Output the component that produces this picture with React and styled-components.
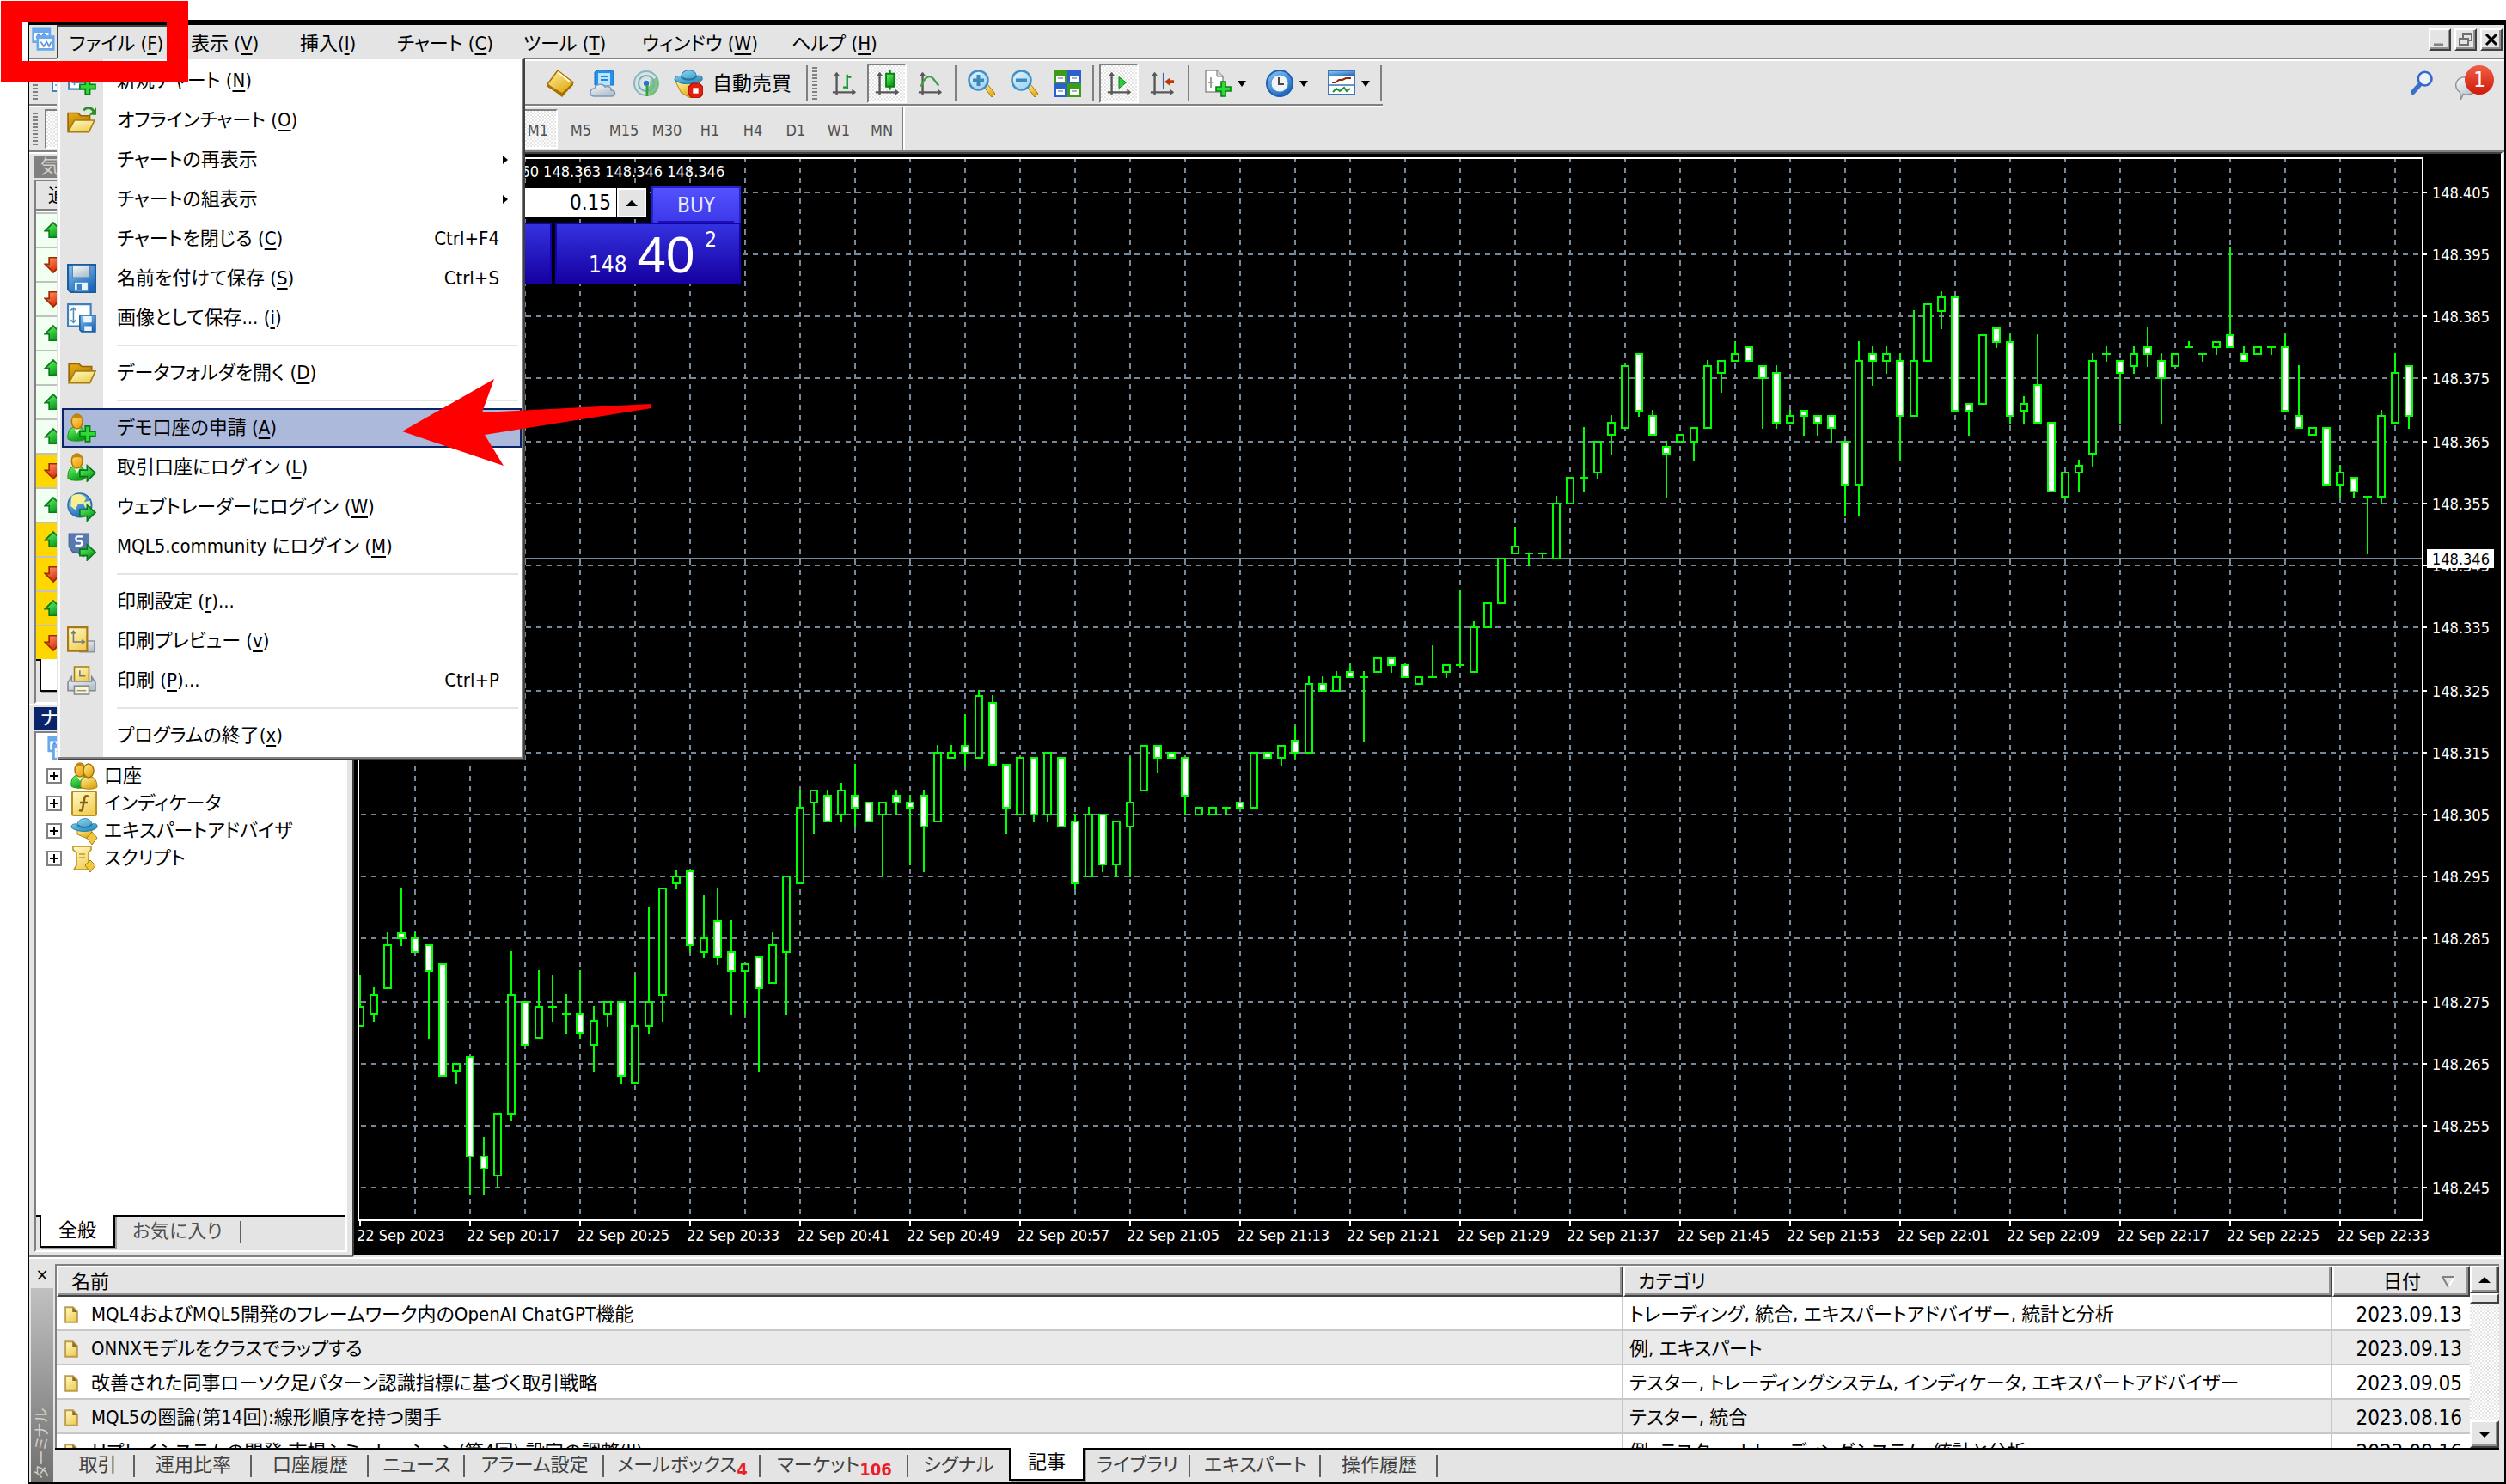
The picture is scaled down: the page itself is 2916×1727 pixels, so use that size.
import React from "react";
import styled, { createGlobalStyle, css } from "styled-components";

const GlobalStyle = createGlobalStyle`
  * {
    box-sizing: border-box;
  }

  body {
    margin: 0;
    background: #fff;
    color: #000;
    font-family: "DejaVu Sans Condensed", "Noto Sans CJK JP", sans-serif;
    font-size: 22px;
    line-height: 28px;
    font-feature-settings: "palt";
  }

  button,
  input {
    font: inherit;
    font-feature-settings: inherit;
    color: inherit;
    border: 0;
    border-radius: 0;
    padding: 0;
    background: none;
  }
`;

/* ---------- data ---------- */

const menus = [
  { label: "ファイル (", key: "F", width: 141, open: true },
  { label: "表示 (", key: "V", width: 127 },
  { label: "挿入(", key: "I", width: 113 },
  { label: "チャート (", key: "C", width: 147 },
  { label: "ツール (", key: "T", width: 138 },
  { label: "ウィンドウ (", key: "W", width: 174 },
  { label: "ヘルプ (", key: "H", width: 140 },
];

const fileMenu = [
  { label: "新規チャート (", key: "N", icon: "newChart" },
  { label: "オフラインチャート (", key: "O", icon: "folderArrow" },
  { label: "チャートの再表示", sub: true },
  { label: "チャートの組表示", sub: true },
  { label: "チャートを閉じる (", key: "C", shortcut: "Ctrl+F4" },
  { label: "名前を付けて保存 (", key: "S", icon: "floppy", shortcut: "Ctrl+S" },
  { label: "画像として保存... (", key: "i", icon: "savePicture" },
  null,
  { label: "データフォルダを開く (", key: "D", icon: "folder" },
  null,
  { label: "デモ口座の申請 (", key: "A", icon: "userPlus", active: true },
  { label: "取引口座にログイン (", key: "L", icon: "userArrow" },
  { label: "ウェブトレーダーにログイン (", key: "W", icon: "globeArrow" },
  { label: "MQL5.community にログイン (", key: "M", icon: "mqlArrow" },
  null,
  { label: "印刷設定 (", key: "r", tail: ")..." },
  { label: "印刷プレビュー (", key: "v", icon: "preview" },
  { label: "印刷 (", key: "P", tail: ")...", icon: "printer", shortcut: "Ctrl+P" },
  null,
  { label: "プログラムの終了(", key: "x" },
];

const periods = ["M1", "M5", "M15", "M30", "H1", "H4", "D1", "W1", "MN"];

const quotes = [
  { up: true },
  { up: false },
  { up: false },
  { up: true },
  { up: true },
  { up: true },
  { up: true },
  { up: false, hot: true },
  { up: true },
  { up: true, hot: true },
  { up: false, hot: true },
  { up: true, hot: true },
  { up: false, hot: true },
];

const navigator = [
  { label: "口座", icon: "accounts" },
  { label: "インディケータ", icon: "indicator" },
  { label: "エキスパートアドバイザ", icon: "expert" },
  { label: "スクリプト", icon: "script" },
];

const articles = [
  {
    title: "MQL4およびMQL5開発のフレームワーク内のOpenAI ChatGPT機能",
    category: "トレーディング, 統合, エキスパートアドバイザー, 統計と分析",
    date: "2023.09.13",
  },
  { title: "ONNXモデルをクラスでラップする", category: "例, エキスパート", date: "2023.09.13" },
  {
    title: "改善された同事ローソク足パターン認識指標に基づく取引戦略",
    category: "テスター, トレーディングシステム, インディケータ, エキスパートアドバイザー",
    date: "2023.09.05",
  },
  { title: "MQL5の圏論(第14回):線形順序を持つ関手", category: "テスター, 統合", date: "2023.08.16" },
  {
    title: "リプレイシステムの開発-市場シミュレーション(第4回):設定の調整(II)",
    category: "例, テスター, トレーディングシステム, 統計と分析",
    date: "2023.08.16",
  },
];

const terminalTabs = [
  { label: "取引", width: 93 },
  { label: "運用比率", width: 136 },
  { label: "口座履歴", width: 136 },
  { label: "ニュース", width: 112 },
  { label: "アラーム設定", width: 162 },
  { label: "メールボックス", width: 182, count: 4 },
  { label: "マーケット", width: 172, count: 106 },
  { label: "シグナル", width: 117, last: true },
  { label: "記事", width: 88, active: true },
  { label: "ライブラリ", width: 123 },
  { label: "エキスパート", width: 152 },
  { label: "操作履歴", width: 136 },
];

// [open, high, low, close] in points above 148.000
const candles = [
  [271, 279, 271, 274], [273, 277, 272, 276], [277, 286, 277, 284], [286, 293, 284, 285],
  [285, 286, 283, 283], [284, 284, 269, 280], [281, 281, 263, 263], [264, 265, 262, 265],
  [266, 266, 244, 250], [250, 253, 244, 248], [247, 257, 245, 257], [257, 283, 256, 276],
  [275, 275, 268, 268], [269, 280, 269, 274], [274, 279, 272, 274], [273, 276, 270, 273],
  [273, 280, 269, 270], [268, 274, 264, 272], [273, 275, 271, 275], [275, 275, 262, 263],
  [262, 279, 262, 271], [271, 290, 270, 275], [276, 293, 272, 293], [294, 296, 293, 295],
  [296, 296, 283, 284], [283, 292, 282, 285], [288, 293, 281, 282], [283, 288, 273, 280],
  [280, 281, 273, 281], [282, 282, 264, 277], [278, 286, 278, 284], [283, 295, 273, 295],
  [294, 309, 294, 306], [307, 309, 302, 309], [308, 309, 304, 304], [305, 310, 304, 309],
  [308, 313, 303, 306], [307, 307, 304, 304], [305, 307, 295, 307], [308, 309, 305, 307],
  [307, 308, 297, 306], [308, 309, 296, 303], [304, 316, 304, 315], [314, 316, 314, 315],
  [316, 321, 313, 315], [314, 325, 314, 324], [323, 324, 313, 313], [313, 313, 302, 306],
  [305, 314, 305, 314], [314, 314, 304, 305], [305, 315, 304, 315], [314, 314, 303, 303],
  [304, 305, 293, 294], [295, 306, 295, 305], [305, 305, 296, 297], [297, 304, 295, 304],
  [303, 314, 295, 307], [309, 316, 309, 316], [316, 316, 312, 314], [315, 315, 314, 314],
  [314, 314, 305, 308], [305, 306, 305, 306], [305, 306, 305, 306], [306, 306, 305, 306],
  [307, 307, 306, 306], [306, 315, 306, 315], [315, 315, 314, 314], [314, 316, 313, 316],
  [317, 319, 314, 315], [315, 327, 315, 326], [326, 327, 325, 325], [325, 328, 325, 327],
  [328, 329, 327, 327], [327, 328, 317, 327], [328, 330, 328, 330], [330, 330, 328, 329],
  [329, 329, 327, 327], [326, 327, 326, 327], [327, 332, 327, 327], [328, 329, 327, 329],
  [329, 341, 329, 329], [328, 336, 328, 335], [335, 339, 335, 339], [339, 346, 339, 346],
  [347, 351, 347, 348], [347, 347, 345, 347], [347, 347, 346, 347], [346, 356, 346, 355],
  [355, 359, 355, 359], [359, 367, 357, 359], [360, 365, 359, 365], [366, 369, 363, 368],
  [367, 377, 367, 377], [379, 379, 369, 370], [369, 370, 366, 366], [364, 365, 356, 363],
  [365, 366, 365, 366], [365, 367, 362, 367], [367, 378, 367, 377], [376, 378, 373, 378],
  [378, 381, 378, 379], [380, 380, 378, 378], [377, 377, 367, 375], [376, 377, 367, 368],
  [368, 370, 368, 369], [370, 370, 366, 369], [369, 369, 366, 368], [369, 369, 365, 367],
  [365, 365, 353, 358], [358, 381, 353, 378], [379, 380, 374, 378], [378, 380, 376, 379],
  [378, 379, 362, 369], [369, 386, 369, 378], [378, 387, 378, 387], [386, 389, 383, 388],
  [388, 388, 370, 370], [371, 371, 366, 370], [371, 382, 371, 382], [383, 383, 380, 381],
  [381, 382, 368, 369], [370, 372, 368, 371], [374, 382, 368, 368], [368, 368, 357, 357],
  [356, 360, 356, 360], [360, 362, 357, 361], [363, 379, 361, 378], [379, 380, 378, 379],
  [378, 378, 368, 376], [377, 380, 376, 379], [380, 383, 377, 379], [378, 379, 368, 375],
  [377, 379, 377, 379], [380, 381, 380, 380], [379, 379, 378, 379], [380, 381, 379, 381],
  [382, 396, 380, 380], [379, 380, 378, 378], [379, 380, 379, 380], [380, 380, 379, 380],
  [380, 382, 370, 370], [369, 377, 367, 367], [366, 367, 366, 367], [367, 367, 358, 358],
  [358, 361, 356, 360], [359, 359, 356, 357], [356, 356, 347, 356], [356, 370, 355, 369],
  [368, 379, 368, 376], [377, 377, 367, 369],
];

/* ---------- icons ---------- */

const Svg = styled.svg`
  display: block;
  flex: none;
  width: ${({ $size }) => $size || 32}px;
  height: ${({ $size }) => $size || 32}px;
`;

const Gradients = styled.svg`
  position: absolute;
  width: 0;
  height: 0;
`;

const Grad = ({ id, from, to }) => (
  <linearGradient id={id} x1="0" y1="0" x2="0.6" y2="1">
    <stop offset="0" stopColor={from} />
    <stop offset="1" stopColor={to} />
  </linearGradient>
);

const Defs = () => (
  <Gradients aria-hidden="true">
    <defs>
      <Grad id="gold" from="#fff3a0" to="#e0a510" />
      <Grad id="darkGold" from="#e8b018" to="#b07800" />
      <Grad id="paleGold" from="#fffbc8" to="#f0d058" />
      <Grad id="skin" from="#ffe078" to="#f0a010" />
      <Grad id="green" from="#6cf86c" to="#0a9a1a" />
      <Grad id="red" from="#ff9a70" to="#d82800" />
      <Grad id="blue" from="#8cc8f4" to="#2068b8" />
      <Grad id="sky" from="#e8f8ff" to="#a0d4f4" />
      <Grad id="steel" from="#f8fafc" to="#b4c0cc" />
      <Grad id="hat" from="#98dcf4" to="#3090c0" />
    </defs>
  </Gradients>
);

const Plus = () => (
  <path d="M20 14h5v6h6v5h-6v6h-5v-6h-6v-5h6z" fill="#30d838" stroke="#068010" strokeWidth="1.6" />
);

const GoArrow = () => (
  <path d="M14 19h8v-5l9 8-9 9v-5h-8z" fill="url(#green)" stroke="#06781a" strokeWidth="1.6" />
);

const User = () => (
  <>
    <path d="M1 28c-1-9 3-13 8-13h4c5 0 7 5 7 13-4 3-15 3-19 0z" fill="url(#green)" stroke="#1c9a1c" />
    <path d="M7 15l4 7 4-7z" fill="#f4fff0" />
    <ellipse cx="11" cy="9" rx="6" ry="8" fill="url(#skin)" stroke="#b07800" strokeWidth="1.500" />
    <path d="M5 7c0-8 12-8 12 0-2-3-9-3-12 0z" fill="#c08810" />
  </>
);

const Axes = () => (
  <>
    <path d="M7 3v27M2 27h28" stroke="#585858" strokeWidth="2.500" fill="none" />
    <path d="M3 7l4-5 4 5zM26 23l5 4-5 4z" fill="#585858" />
  </>
);

const Lens = ({ plus }) => (
  <>
    <path d="M19 20l4-3 9 11-4 4z" fill="url(#gold)" stroke="#a87800" />
    <circle cx="12.500" cy="12.500" r="11" fill="url(#sky)" stroke="#4090c8" strokeWidth="2.500" />
    <path d={plus ? "M6 12.500h13M12.500 6v13" : "M6 12.500h13"} stroke="#4088b8" strokeWidth="4" />
  </>
);

const Hat = () => (
  <>
    <path d="M1 12c0-5 4-4 7-4 2-8 15-9 17 0 4-1 7 0 6 4-6 6-24 6-30 0z" fill="url(#hat)" stroke="#2884b0" />
    <path d="M8 9c4 4 14 4 17-1" stroke="#2478a0" strokeWidth="2" fill="none" />
  </>
);

const icons = {
  logo: (
    <>
      <path d="M3 2h22v17H3z" fill="#fff" stroke="#6aa8e8" strokeWidth="3" />
      <path d="M3 2h22v5H3z" fill="#6aa8f0" />
      <path d="M7 14l3-5 3 5 4-6 4 5" fill="none" stroke="#5a90e0" strokeWidth="2" />
      <path d="M9 12h21v17H9z" fill="#fff" stroke="#6aa8e8" strokeWidth="3" />
      <path d="M9 11h21v4H9z" fill="#6aa8f0" />
      <path d="M13 19l4 6 4-6 3 6 3-6" fill="none" stroke="#5a90e0" strokeWidth="2" />
    </>
  ),
  newChart: (
    <>
      <path d="M2 3h22v22H2z" fill="#fff" stroke="#4080c0" strokeWidth="2" />
      <path d="M8 8v13M5 11l3-3 3 3M5 18h15" stroke="#5890b8" strokeWidth="1.600" fill="none" />
      <Plus />
    </>
  ),
  folder: (
    <>
      <path d="M2 26V6h11l3 3h11v6" fill="url(#darkGold)" stroke="#966400" strokeWidth="1.500" />
      <path d="M2 27l7-13h22l-6 13z" fill="url(#paleGold)" stroke="#a87c10" strokeWidth="1.500" />
    </>
  ),
  folderArrow: (
    <>
      <path d="M1 28V8h11l3 3h10v5" fill="url(#darkGold)" stroke="#966400" strokeWidth="1.500" />
      <path d="M1 29l7-13h22l-6 13z" fill="url(#paleGold)" stroke="#a87c10" strokeWidth="1.500" />
      <path d="M18 5c4-4 9-3 11 1" stroke="#2c9020" strokeWidth="2.500" fill="none" />
      <path d="M32 2v8h-8z" fill="#2c9020" />
    </>
  ),
  floppy: (
    <>
      <path d="M1 1h30v30H4l-3-3z" fill="url(#blue)" stroke="#1c5c9c" strokeWidth="2" />
      <path d="M6 2h19v13H6z" fill="url(#steel)" stroke="#4888c0" />
      <path d="M8 20h15v10H8z" fill="#eaf4fc" stroke="#4080c0" />
      <path d="M11 22h5v7h-5z" fill="#3880c8" />
    </>
  ),
  savePicture: (
    <>
      <path d="M1 1h25v24H1z" fill="#fff" stroke="#3c80c0" strokeWidth="2" />
      <path d="M7 5v16M4 8l3-3 3 3M4 18l3 3 3-3" stroke="#5090b8" strokeWidth="1.500" fill="none" />
      <path d="M14 13h17v18H16l-2-2z" fill="url(#blue)" stroke="#1c5c9c" strokeWidth="1.500" />
      <path d="M18 14h9v7h-9zM19 25h8v5h-8z" fill="#eaf4fc" />
    </>
  ),
  userPlus: (
    <>
      <User />
      <Plus />
    </>
  ),
  userArrow: (
    <>
      <User />
      <GoArrow />
    </>
  ),
  globeArrow: (
    <>
      <circle cx="14" cy="14" r="13" fill="url(#blue)" stroke="#2870b0" strokeWidth="1.500" />
      <path d="M5 4c6-4 13-2 16 2l-3 6-6 1-3 6-5-4z" fill="#f8f090" />
      <path d="M17 11l8-2 1 6-6 2z" fill="#d8f0a0" />
      <GoArrow />
    </>
  ),
  mqlArrow: (
    <>
      <path d="M2 2h22v16l-6 9-8-5H6l-4-6z" fill="#5a78b0" stroke="#40609a" />
      <path d="M17 5h-5c-3 0-3 5 0 5h2c3 0 3 5 0 5h-5" fill="none" stroke="#fff" strokeWidth="2.200" />
      <GoArrow />
    </>
  ),
  preview: (
    <>
      <path d="M14 16h16v12H14z" fill="url(#steel)" stroke="#8a949c" strokeWidth="1.500" />
      <path d="M1 1h21v26H1z" fill="url(#paleGold)" stroke="#a87818" strokeWidth="2" />
      <path d="M7 5v12h12M5 8l2-3 2 3M16 15l3 2-3 2" stroke="#707880" strokeWidth="1.500" fill="none" />
    </>
  ),
  printer: (
    <>
      <path d="M8 1h16v16H8z" fill="url(#paleGold)" stroke="#a87818" strokeWidth="1.500" />
      <path d="M14 5v6h6" stroke="#707880" strokeWidth="1.500" fill="none" />
      <path d="M5 12L1 18v9h30v-9l-4-6v5H5z" fill="url(#steel)" stroke="#808890" strokeWidth="1.500" />
      <path d="M8 22h16v9H8z" fill="#fff8d0" stroke="#808890" strokeWidth="1.500" />
      <path d="M11 27h10" stroke="#909890" strokeWidth="1.500" />
    </>
  ),
  diamond: (
    <>
      <path d="M13 1l18 14-13 16L1 17z" fill="url(#gold)" stroke="#a87000" strokeWidth="1.500" />
      <path d="M1 17l17 10 13-12v3L18 31 1 20z" fill="#a87000" />
      <path d="M13 3l14 11" stroke="#fffbe0" strokeWidth="2" />
    </>
  ),
  noteCloud: (
    <>
      <path d="M6 3l5-3 17 2v16H6z" fill="#2890e8" stroke="#1070c8" />
      <path d="M10 4h14v14H10z" fill="#b8e4ff" />
      <path d="M13 8h9M13 12h9" stroke="#2088d8" strokeWidth="2" />
      <path d="M5 31c-6-1-5-9 1-9 1-6 10-6 12-2 5-2 8 2 7 4 6 0 6 7 0 7z" fill="url(#steel)" stroke="#8098b8" strokeWidth="1.500" />
    </>
  ),
  radar: (
    <>
      <circle cx="16" cy="16" r="14" fill="#d4e4e0" stroke="#90b4bc" strokeWidth="2" />
      <path d="M16 16l4 15c9-3 13-12 8-22z" fill="#68c068" opacity="0.800" />
      <circle cx="16" cy="16" r="9" fill="none" stroke="#7ca8c0" strokeWidth="2" />
      <circle cx="16" cy="16" r="4" fill="#3070d0" stroke="#fff" />
      <path d="M17 18v13" stroke="#38a038" strokeWidth="3" />
    </>
  ),
  robot: (
    <>
      <path d="M2 14h26l-2 7-8 11-10-6z" fill="url(#gold)" stroke="#b88a18" />
      <Hat />
      <path d="M20 16h8l4 4v8l-4 4h-8l-4-4v-8z" fill="#e02010" stroke="#a81000" />
      <path d="M21 21h6v6h-6z" fill="#fff" />
    </>
  ),
  bars: (
    <>
      <Axes />
      <path d="M20 5v18M20 8h5M15 21h5" stroke="#109828" strokeWidth="2.500" fill="none" />
    </>
  ),
  candle: (
    <>
      <Axes />
      <path d="M20 0v24" stroke="#068010" strokeWidth="2" />
      <path d="M15 4h10v16H15z" fill="url(#green)" stroke="#068010" strokeWidth="2" />
    </>
  ),
  line: (
    <>
      <Axes />
      <path d="M5 20C10 6 17 6 20 10l7 9" stroke="#40a048" strokeWidth="2.500" fill="none" />
    </>
  ),
  zoomIn: <Lens plus />,
  zoomOut: <Lens />,
  tiles: (
    <>
      <path d="M0 0h16v16H0zM16 16h16v16H16z" fill="#3c9c18" />
      <path d="M16 0h16v16H16zM0 16h16v16H0z" fill="#2c60d0" />
      <path d="M3 7h10v7H3zM19 7h10v7H19zM3 22h10v7H3zM19 22h10v7H19z" fill="#fff" />
      <path d="M5 10h6M21 10h6M5 25h6M21 25h6" stroke="#a0b4c8" strokeWidth="2" />
    </>
  ),
  autoScroll: (
    <>
      <Axes />
      <path d="M16 8l9 7-9 7z" fill="#28d038" stroke="#088018" />
    </>
  ),
  shift: (
    <>
      <Axes />
      <path d="M18 3v20" stroke="#3068a0" strokeWidth="2" />
      <path d="M19 14l7-5v3h5v4h-5v3z" fill="#c03808" />
    </>
  ),
  docPlus: (
    <>
      <path d="M2 1h13l7 7v18H2z" fill="#fff" stroke="#909090" strokeWidth="1.500" />
      <path d="M15 1v7h7" fill="#d8d8d8" stroke="#707070" />
      <path d="M8 9v12M5 15h6" stroke="#a0a0a0" strokeWidth="2" />
      <Plus />
    </>
  ),
  clock: (
    <>
      <circle cx="16" cy="16" r="15" fill="url(#blue)" stroke="#1860b8" strokeWidth="2" />
      <circle cx="16" cy="16" r="10" fill="#f0f4f8" stroke="#5898d8" />
      <path d="M15 9v8h6" stroke="#484848" strokeWidth="2" fill="none" />
    </>
  ),
  template: (
    <>
      <path d="M1 2h30v27H1z" fill="#fff" stroke="#3c78b8" strokeWidth="2" />
      <path d="M1 2h30v6H1z" fill="url(#blue)" />
      <path d="M1 18h30" stroke="#6898c8" strokeWidth="2" />
      <path d="M5 15h4l4-3h4l4-2h6" stroke="#902808" strokeWidth="2" fill="none" />
      <path d="M6 26l4-4 4 3 5-4 3 4 4-3" stroke="#209030" strokeWidth="2" fill="none" />
    </>
  ),
  search: (
    <>
      <path d="M3 29l9-10" stroke="#3870c8" strokeWidth="6" strokeLinecap="round" />
      <circle cx="19" cy="11" r="9" fill="#eef4fc" stroke="#3468d0" strokeWidth="3" />
    </>
  ),
  chat: <path d="M8 23C-2 15 4 3 16 4s18 14 8 20c-4 2-8 2-12 1l-3 7z" fill="url(#steel)" stroke="#909090" strokeWidth="1.500" />,
  accounts: (
    <>
      <User />
      <path d="M12 29c-1-8 2-12 7-12h4c5 0 8 5 8 12-4 3-15 3-19 0z" fill="url(#gold)" stroke="#a88010" />
      <ellipse cx="21" cy="10" rx="6" ry="8" fill="url(#gold)" stroke="#a87000" strokeWidth="1.500" />
    </>
  ),
  indicator: (
    <>
      <rect x="2" y="2" width="28" height="28" rx="2" fill="url(#paleGold)" stroke="#b89020" strokeWidth="2" />
      <path d="M21 8c-4-2-5 1-5 4l-2 10c0 3-2 3-4 2M11 15h9" stroke="#886010" strokeWidth="2.500" fill="none" />
    </>
  ),
  expert: (
    <>
      <path d="M8 14h18l-6 11-12-5z" fill="url(#gold)" stroke="#b88a18" />
      <Hat />
      <path d="M25 17l6 7-6 8-6-8z" fill="#f0c840" stroke="#a88010" />
    </>
  ),
  script: (
    <>
      <path d="M3 2h21v4l-3 3v15l4 5H4l3-5V9L3 6z" fill="url(#paleGold)" stroke="#b89020" strokeWidth="1.500" />
      <path d="M10 11h7M10 15h7" stroke="#b89838" strokeWidth="1.500" />
      <path d="M23 18l6 6-6 8-6-8z" fill="#f0c840" stroke="#a88010" />
    </>
  ),
  up: <path d="M16 3l14 14h-7v11H9V17H2z" fill="url(#green)" stroke="#0a7a1a" strokeWidth="2.500" />,
  down: <path d="M16 29L2 15h7V4h14v11h7z" fill="url(#red)" stroke="#a02800" strokeWidth="2.500" />,
  doc: (
    <>
      <path d="M5 2h14l8 8v20H5z" fill="url(#paleGold)" stroke="#bc9c50" strokeWidth="3" />
      <path d="M18 2v9h9z" fill="#8a6c28" />
    </>
  ),
};

const Icon = ({ name, size }) => (
  <Svg viewBox="0 0 32 32" $size={size} aria-hidden="true">
    {icons[name]}
  </Svg>
);

const Caret = styled.span`
  flex: none;
  border: ${({ $big }) => ($big ? 7 : 5)}px solid transparent;
  ${({ $dir }) => $dir === "down" && "border-top: 7px solid #000; border-bottom: 0;"}
  ${({ $dir }) => $dir === "up" && "border-bottom: 7px solid #000; border-top: 0;"}
  ${({ $dir }) => $dir === "right" && "border-left: 6px solid #000; border-right: 0;"}
`;

/* ---------- window and menu ---------- */

const Page = styled.div`
  position: relative;
  min-height: 100vh;
  padding: 23px 0 0 32px;
  display: flex;
  white-space: nowrap;
`;

const Window = styled.div`
  flex: 1;
  min-width: 0;
  display: flex;
  flex-direction: column;
  background: #e4e4e4;
  border: 2px solid #000;
  border-top-width: 6px;
`;

const MenuBar = styled.nav`
  position: relative;
  display: flex;
  align-items: stretch;
  height: 42px;
  border-bottom: 2px solid #fff;
  box-shadow: inset 0 -2px #808080;
`;

const LogoBox = styled.div`
  width: 32px;
  padding: 3px 2px;
`;

const MenuButton = styled.button`
  width: ${({ $width }) => $width}px;
  padding: 4px 0 2px 13px;
  text-align: left;
  border: 2px solid transparent;
  border-bottom: 0;
  ${({ $open }) => $open && "border-top-color: #404040; border-left-color: #404040;"}

  u {
    text-underline-offset: 4px;
  }
`;

const WindowButtons = styled.div`
  display: flex;
  gap: 4px;
  margin-left: auto;
  padding: 4px 2px 0 0;
`;

const WindowButton = styled.button`
  width: 26px;
  height: 26px;
  padding: 2px;
  background: #e4e4e4;
  border: 2px solid;
  border-color: #fff #404040 #404040 #fff;
  box-shadow: inset -2px -2px #909090;
`;

const Popup = styled.div`
  position: absolute;
  left: 32px;
  top: 38px;
  z-index: 2;
  width: 545px;
  padding: 2px 2px 4px;
  background: linear-gradient(90deg, #fff 2px, #e4e4e4 2px, #e4e4e4 52px, #fff 52px);
  border: 2px solid #e4e4e4;
  border-right-color: #404040;
  border-bottom-color: #404040;
  box-shadow: inset -2px -2px #808080;
`;

const PopupItem = styled.button`
  display: flex;
  align-items: center;
  width: 535px;
  height: 46px;
  margin-left: 2px;
  padding-right: 24px;
  border: 2px solid transparent;
  ${({ $active }) => $active && "background: #adb9da; border-color: #0a246a;"}

  kbd {
    margin-left: auto;
    font: inherit;
  }

  u {
    text-underline-offset: 4px;
  }
`;

const PopupIcon = styled.span`
  width: 62px;
  padding-left: 4px;
`;

const SubMark = styled.span`
  display: flex;
  margin: 0 -10px 0 auto;
`;

const PopupLine = styled.hr`
  height: 2px;
  margin: 8px 4px 8px 66px;
  border: 0;
  background: #e4e4e4;
`;

/* ---------- toolbars ---------- */

const Toolbar = styled.div`
  display: flex;
  align-items: stretch;
  height: 54px;
  flex: none;
`;

const ToolGroup = styled.div`
  display: flex;
  align-items: center;
  height: 54px;
  border-bottom: 2px solid #fff;
  box-shadow: inset 0 -2px #808080;
`;

const PeriodBar = styled.div`
  display: flex;
  height: 50px;
  flex: none;
`;

const PeriodGroup = styled.div`
  display: flex;
  align-items: center;
  height: 50px;
  border-right: 2px solid #fff;
  box-shadow: inset -2px 0 #808080;
`;

const Grip = styled.span`
  width: 6px;
  height: 38px;
  margin: 0 6px 0 4px;
  flex: none;
  background: repeating-linear-gradient(#808080 0 2px, transparent 2px 4px);
`;

const Lead = styled.span`
  display: flex;
  width: ${({ $width }) => $width}px;
  flex: none;
`;

const Tool = styled.button`
  display: flex;
  align-items: center;
  justify-content: center;
  gap: 7px;
  width: ${({ $wide }) => ($wide ? 72 : 50)}px;
  height: 50px;
  ${({ $pressed }) =>
    $pressed &&
    css`
      width: 46px;
      height: 46px;
      margin: 0 2px;
      border: 2px solid;
      border-color: #808080 #fff #fff #808080;
      background: repeating-conic-gradient(#fff 0 25%, #e4e4e4 0 50%) 0 0 / 4px 4px;
    `}
`;

const AutoTool = styled(Tool)`
  width: 160px;
  justify-content: flex-start;
  gap: 11px;
  padding-left: 7px;
  font-size: 23px;
`;

const Divider = styled.span`
  width: 2px;
  height: 42px;
  margin: 0 ${({ $gap }) => $gap || 4}px;
  flex: none;
  background: #808080;
`;

const Period = styled(Tool)`
  padding-top: 4px;
  font-size: 18px;
  color: #505050;
`;

const Corner = styled.div`
  display: flex;
  align-items: center;
  gap: 22px;
  height: 50px;
  margin-left: auto;
  padding-right: 12px;
`;

const ChatButton = styled.button`
  position: relative;
  width: 47px;
  padding-top: 10px;
`;

const Badge = styled.span`
  position: absolute;
  right: 0;
  top: 0;
  width: 34px;
  height: 34px;
  border-radius: 50%;
  background: linear-gradient(#f06048, #d01808);
  color: #fff;
  font-size: 24px;
  line-height: 34px;
  text-align: center;
`;

/* ---------- side panes ---------- */

const Workspace = styled.div`
  flex: 1;
  display: flex;
  border-top: 2px solid #808080;
`;

const Side = styled.aside`
  width: 376px;
  flex: none;
  display: flex;
  flex-direction: column;
  border-top: 2px solid #fff;
  border-bottom: 2px solid #808080;
`;

const Pane = styled.section`
  display: flex;
  flex-direction: column;
  padding: 2px 6px 0;
  ${({ $grow }) => $grow && "flex: 1; border-top: 2px solid #fff; padding-bottom: 4px;"}
`;

const PaneTitle = styled.h2`
  height: 26px;
  margin: 0 0 2px;
  padding-left: 7px;
  font-size: 22px;
  font-weight: 400;
  line-height: 26px;
  overflow: hidden;
  color: ${({ $active }) => ($active ? "#fff" : "#d4d0c8")};
  background: ${({ $active }) => ($active ? "#0a246a" : "#808080")};
`;

const Frame = styled.div`
  display: flex;
  flex-direction: column;
  border: 2px solid;
  border-color: #808080 #fff #fff #808080;
  ${({ $grow }) => $grow && "flex: 1;"}
`;

const QuoteHead = styled.div`
  height: 36px;
  padding-left: 14px;
  line-height: 34px;
  border-bottom: 2px solid #fff;
  box-shadow: inset 0 -2px #808080;
`;

const QuoteRow = styled.div`
  display: flex;
  align-items: center;
  height: 40px;
  padding-left: 9px;
  border-top: 2px solid #c0c0c0;
  background: ${({ $hot }) => ($hot ? "#ffd700" : "#f0fff0")};
`;

const PaneTabs = styled.div`
  display: flex;
  height: ${({ $tall }) => ($tall ? 41 : 50)}px;
  padding-left: 4px;
  border-top: 2px solid #000;
`;

const PaneTab = styled.button`
  height: 38px;
  margin-top: -2px;
  padding: 0 20px;
  color: #505050;
  ${({ $active }) =>
    $active &&
    css`
      width: 88px;
      padding: 0;
      color: #000;
      background: #fff;
      border: 2px solid #000;
      border-top: 0;
      box-shadow: 2px 2px #a0a0a0;
    `}
`;

const TabRule = styled.span`
  width: 2px;
  height: 26px;
  margin-top: 5px;
  background: #606060;
`;

const Tree = styled.ul`
  flex: 1;
  margin: 0;
  padding: 2px 0 0 12px;
  list-style: none;
  background: #fff;
`;

const TreeItem = styled.li`
  display: flex;
  align-items: center;
  height: 32px;
  gap: 7px;
`;

const Expander = styled.button`
  width: 18px;
  height: 18px;
  margin-right: 3px;
  flex: none;
  border: 2px solid #808080;
  background:
    linear-gradient(#000, #000) center / 10px 2px no-repeat,
    linear-gradient(#000, #000) center / 2px 10px no-repeat,
    #fff;
`;

/* ---------- chart ---------- */

const ChartPane = styled.main`
  position: relative;
  flex: 1;
  min-width: 0;
  margin-right: 2px;
  border: 2px solid;
  border-color: #404040 #fff #e4e4e4 #404040;
  background: #000;
`;

const Plot = styled.svg`
  display: block;
  width: 100%;
  font-size: 18px;
`;

const Ohlc = styled.p`
  position: absolute;
  left: 148px;
  top: 9px;
  margin: 0;
  color: #fff;
  font-size: 18px;
  line-height: 24px;
`;

const OneClick = styled.div`
  position: absolute;
  left: 100px;
  top: 38px;
  width: 350px;
  display: grid;
  grid-template-columns: 134px 1fr 104px;
  grid-template-rows: 42px 72px;
  color: #fff;
`;

const LotBox = styled.div`
  display: flex;
  grid-column: 1 / 3;
  height: 34px;
  margin: 2px 6px 0 0;
`;

const LotInput = styled.input`
  flex: 1;
  min-width: 0;
  padding-right: 6px;
  background: #fff;
  color: #000;
  font-size: 24px;
  text-align: right;
`;

const Spin = styled.button`
  display: flex;
  align-items: center;
  justify-content: center;
  width: 34px;
  margin-left: 1px;
  background: #e4e4e4;
  border: 2px solid #fff;
`;

const BuyTab = styled.button`
  background: linear-gradient(#5452ff, #3a38e8);
  border: 2px solid #2420d0;
  border-bottom: 0;
  font-size: 24px;
  color: #e8e8ff;

  span {
    display: block;
    margin: 0 6px;
    padding-top: 6px;
    height: 40px;
    border-bottom: 2px solid #1c10b0;
  }
`;

const Price = styled.button`
  grid-column: ${({ $buy }) => ($buy ? "2 / 4" : "1 / 2")};
  display: flex;
  align-items: baseline;
  justify-content: flex-end;
  gap: 12px;
  margin: 0 4px 0 0;
  padding-right: 26px;
  background: linear-gradient(#3432e0, #1600a0);
  border: 2px solid #1400b0;
  font-size: 26px;
  line-height: 72px;
  ${({ $buy }) => $buy && "margin: 0;"}

  strong {
    font-family: "Liberation Sans", sans-serif;
    font-size: 60px;
    font-weight: 400;
  }

  sup {
    align-self: flex-start;
    font-size: 24px;
    line-height: 36px;
  }
`;

/* ---------- terminal ---------- */

const Terminal = styled.section`
  display: flex;
  height: 262px;
  flex: none;
  border-top: 2px solid #fff;
`;

const Spine = styled.div`
  width: 30px;
  flex: none;
  display: flex;
  flex-direction: column;
  padding: 10px 2px 0;
`;

const CloseButton = styled.button`
  height: 16px;
  margin-bottom: 8px;
  font-size: 20px;
  line-height: 16px;
`;

const SpineTitle = styled.h2`
  flex: 1;
  margin: 0;
  padding-top: 4px;
  font-size: 18px;
  font-weight: 400;
  line-height: 26px;
  color: #d4d0c8;
  background: linear-gradient(#707070, #c0c0c0);
  writing-mode: vertical-rl;
  text-orientation: sideways;
  transform: rotate(180deg);
`;

const TerminalBody = styled.div`
  flex: 1;
  min-width: 0;
  display: flex;
  flex-direction: column;
  padding: 6px 6px 0 0;
`;

const TableArea = styled.div`
  display: flex;
  height: 214px;
  overflow: hidden;
  border-top: 2px solid #808080;
  border-left: 2px solid #808080;
`;

const Table = styled.table`
  flex: 1;
  min-width: 0;
  height: 236px;
  table-layout: fixed;
  border-collapse: separate;
  border-spacing: 0;
`;

const Th = styled.th`
  height: 36px;
  width: ${({ $width }) => ($width ? `${$width}px` : "auto")};
  padding: 2px 15px 0;
  text-align: ${({ $right }) => ($right ? "right" : "left")};
  font-weight: 400;
  border-top: 2px solid #fff;
  border-left: 2px solid #fff;
  border-right: 2px solid #404040;
  border-bottom: 2px solid #404040;
  box-shadow: inset -2px -2px #909090;
`;

const SortMark = styled.svg`
  width: 16px;
  height: 14px;
  margin-left: 24px;
`;

const Tr = styled.tr`
  background: ${({ $alt }) => ($alt ? "#eaeaea" : "#fff")};
`;

const Td = styled.td`
  height: 40px;
  padding: 4px 7px 0;
  border-right: 2px solid #c8c8c8;
  border-bottom: 2px solid #c8c8c8;
  ${({ $date }) => $date && "border-right: 0; padding-right: 9px; text-align: right; font-size: 24px;"}
`;

const TitleCell = styled.div`
  display: flex;
  align-items: center;
  gap: 13px;
`;

const ScrollBar = styled.div`
  width: 34px;
  display: flex;
  flex-direction: column;
  justify-content: space-between;
  background: repeating-conic-gradient(#fff 0 25%, #e4e4e4 0 50%) 0 0 / 4px 4px;
`;

const ScrollButton = styled.button`
  display: flex;
  align-items: center;
  justify-content: center;
  height: 32px;
  width: 100%;
  background: #e4e4e4;
  border: 2px solid;
  border-color: #fff #404040 #404040 #fff;
  box-shadow: inset -2px -2px #909090;
`;

const Thumb = styled.div`
  height: 12px;
  background: #e4e4e4;
  border: 2px solid;
  border-color: #fff #404040 #404040 #fff;
`;

const TerminalTabs = styled.div`
  display: flex;
  height: 40px;
  border-top: 2px solid #000;
`;

const TerminalTab = styled.button`
  position: relative;
  width: ${({ $width }) => $width}px;
  height: 38px;
  padding-bottom: 2px;
  color: #404040;

  &:first-child {
    padding-left: 6px;
  }

  &::after {
    content: "";
    position: absolute;
    right: 0;
    top: 6px;
    width: 2px;
    height: 26px;
    background: ${({ $plain }) => ($plain ? "transparent" : "#606060")};
  }

  ${({ $active }) =>
    $active &&
    css`
      margin-top: -2px;
      color: #000;
      background: #fff;
      border: 2px solid #000;
      border-top: 0;
      box-shadow: 2px 2px #a0a0a0;
    `}

  sub {
    color: #ee1c24;
    font-size: 20px;
    font-weight: 700;
    line-height: 10px;
  }
`;

/* ---------- marks drawn over the window ---------- */

const RedFrame = styled.div`
  position: absolute;
  left: 1px;
  top: 1px;
  z-index: 3;
  width: 218px;
  height: 95px;
  border: 25px solid #f00;
  pointer-events: none;
`;

const RedArrow = styled.svg`
  position: absolute;
  left: 468px;
  top: 441px;
  z-index: 3;
  width: 290px;
  height: 101px;
  pointer-events: none;
`;

/* ---------- components ---------- */

const Label = ({ item }) => (
  <span>
    {item.label}
    {item.key && (
      <>
        <u>{item.key}</u>
        {item.tail || ")"}
      </>
    )}
  </span>
);

const FileMenu = () => (
  <Popup role="menu">
    {fileMenu.map((item, i) =>
      item ? (
        <PopupItem key={item.label} role="menuitem" $active={item.active}>
          <PopupIcon>{item.icon && <Icon name={item.icon} size={34} />}</PopupIcon>
          <Label item={item} />
          {item.shortcut && <kbd>{item.shortcut}</kbd>}
          {item.sub && (
            <SubMark>
              <Caret $dir="right" />
            </SubMark>
          )}
        </PopupItem>
      ) : (
        <PopupLine key={`line-${i}`} />
      )
    )}
  </Popup>
);

// Prices are snapped to the two pixel raster of the plot.
const priceY = (p) => Math.round((295.95 + (395 - p) * 7.245) / 2) * 2 - 179;
const barX = (i) => 7 + i * 16;

const Candle = ({ bar, index }) => {
  const [open, high, low, close] = bar;
  const x = barX(index);
  const top = priceY(Math.max(open, close));
  const bottom = priceY(Math.min(open, close));
  const highY = priceY(high);
  const lowY = priceY(low);
  return (
    <g stroke="#00ff00" strokeWidth="2">
      {high > Math.max(open, close) && <path d={`M${x} ${highY - 1}V${top}`} />}
      {low < Math.min(open, close) && <path d={`M${x} ${bottom}V${lowY + 1}`} />}
      {open === close ? (
        <path d={`M${x - 5} ${top}h10`} />
      ) : (
        <rect x={x - 4} y={top} width="8" height={bottom - top} fill={close > open ? "#000" : "#fff"} />
      )}
    </g>
  );
};

const timeLabel = (n) => {
  if (n === 0) return "22 Sep 2023";
  const minutes = 20 * 60 + 9 + n * 8;
  return `22 Sep ${Math.floor(minutes / 60)}:${String(minutes % 60).padStart(2, "0")}`;
};

const Chart = () => {
  const levels = Array.from({ length: 17 }, (_, i) => 405 - i * 10);
  const columns = Array.from({ length: 37 }, (_, i) => barX((i + 1) * 4)).filter((x) => x < 2406);
  const times = Array.from({ length: 19 }, (_, i) => i);
  return (
    <Plot viewBox="0 0 2498 1282" role="img" aria-label="USDJPY M1">
      <clipPath id="plotArea">
        <rect x="6" y="6" width="2400" height="1234" />
      </clipPath>
      <g stroke="#778899" strokeWidth="2" strokeDasharray="6 6">
        {columns.map((x) => (
          <path key={x} d={`M${x} 4V1240`} />
        ))}
        {levels.map((p) => (
          <path key={p} d={`M8 ${priceY(p)}H2406`} />
        ))}
      </g>
      <path d={`M6 ${priceY(346)}H2406`} stroke="#778899" strokeWidth="2" />
      <g clipPath="url(#plotArea)">
        {candles.map((bar, i) => (
          <Candle key={i} bar={bar} index={i} />
        ))}
      </g>
      <rect x="5" y="5" width="2402" height="1236" fill="none" stroke="#fff" strokeWidth="2" />
      <g fill="#fff">
        {levels.map((p) => (
          <React.Fragment key={p}>
            <rect x="2408" y={priceY(p) - 1} width="4" height="2" />
            <text x="2418" y={priceY(p) + 7}>
              148.{p}
            </text>
          </React.Fragment>
        ))}
        {times.map((n) => (
          <React.Fragment key={n}>
            <rect x={barX(n * 8) - 1} y="1242" width="2" height="6" />
            <text x={barX(n * 8) - 4} y="1265">
              {timeLabel(n)}
            </text>
          </React.Fragment>
        ))}
        <rect x="2412" y="460" width="78" height="22" />
      </g>
      <text x="2418" y="478" fill="#000">
        148.346
      </text>
    </Plot>
  );
};

const MainToolbar = () => (
  <Toolbar>
    <ToolGroup>
      <Grip />
      <Lead $width={577}>
        <Tool aria-label="新規チャート">
          <Icon name="newChart" />
        </Tool>
      </Lead>
      <Tool aria-label="メタエディター">
        <Icon name="diamond" />
      </Tool>
      <Tool aria-label="VPS">
        <Icon name="noteCloud" />
      </Tool>
      <Tool aria-label="シグナル">
        <Icon name="radar" />
      </Tool>
      <AutoTool>
        <Icon name="robot" size={34} />
        自動売買
      </AutoTool>
      <Divider $gap={1} />
      <Grip />
      <Tool aria-label="バーチャート">
        <Icon name="bars" size={30} />
      </Tool>
      <Tool $pressed aria-label="ローソク足">
        <Icon name="candle" size={30} />
      </Tool>
      <Tool aria-label="ラインチャート">
        <Icon name="line" size={30} />
      </Tool>
      <Divider />
      <Tool aria-label="ズームイン">
        <Icon name="zoomIn" />
      </Tool>
      <Tool aria-label="ズームアウト">
        <Icon name="zoomOut" />
      </Tool>
      <Tool aria-label="整列">
        <Icon name="tiles" />
      </Tool>
      <Divider />
      <Tool $pressed aria-label="自動スクロール">
        <Icon name="autoScroll" size={30} />
      </Tool>
      <Tool aria-label="チャートシフト">
        <Icon name="shift" size={30} />
      </Tool>
      <Divider $gap={5} />
      {["docPlus", "clock", "template"].map((name) => (
        <Tool key={name} $wide aria-label={name}>
          <Icon name={name} />
          <Caret $dir="down" />
        </Tool>
      ))}
      <Divider $gap={1} />
    </ToolGroup>
    <Corner>
      <button aria-label="検索">
        <Icon name="search" size={28} />
      </button>
      <ChatButton aria-label="メッセージ">
        <Icon name="chat" size={30} />
        <Badge>1</Badge>
      </ChatButton>
    </Corner>
  </Toolbar>
);

const PeriodToolbar = () => (
  <PeriodBar>
    <PeriodGroup>
      <Grip />
      <Lead $width={551}>
        <Tool $pressed aria-label="カーソル" />
      </Lead>
      {periods.map((p, i) => (
        <Period key={p} $pressed={i === 0}>
          {p}
        </Period>
      ))}
    </PeriodGroup>
  </PeriodBar>
);

const SidePanes = () => (
  <Side>
    <Pane>
      <PaneTitle>気配値表示</PaneTitle>
      <Frame>
        <QuoteHead>通貨ペア</QuoteHead>
        {quotes.map((q, i) => (
          <QuoteRow key={i} $hot={q.hot}>
            <Icon name={q.up ? "up" : "down"} size={22} />
          </QuoteRow>
        ))}
        <PaneTabs>
          <PaneTab $active aria-label="通貨ペアリスト" />
        </PaneTabs>
      </Frame>
    </Pane>
    <Pane $grow>
      <PaneTitle $active>ナビゲーター</PaneTitle>
      <Frame $grow>
        <Tree>
          <TreeItem>
            <Icon name="logo" size={30} />
          </TreeItem>
          {navigator.map((n) => (
            <TreeItem key={n.label}>
              <Expander aria-label={`${n.label}を展開`} />
              <Icon name={n.icon} />
              {n.label}
            </TreeItem>
          ))}
        </Tree>
        <PaneTabs $tall>
          <PaneTab $active>全般</PaneTab>
          <PaneTab>お気に入り</PaneTab>
          <TabRule />
        </PaneTabs>
      </Frame>
    </Pane>
  </Side>
);

const TerminalPanel = () => (
  <Terminal>
    <Spine>
      <CloseButton aria-label="閉じる">×</CloseButton>
      <SpineTitle>ターミナル</SpineTitle>
    </Spine>
    <TerminalBody>
      <TableArea>
        <Table>
          <thead>
            <tr>
              <Th>名前</Th>
              <Th $width={825}>カテゴリ</Th>
              <Th $width={160} $right>
                日付
                <SortMark viewBox="0 0 16 14">
                  <path d="M15 1L8 13" stroke="#fff" strokeWidth="2" />
                  <path d="M8 13L1 1h14" fill="none" stroke="#808080" strokeWidth="2" />
                </SortMark>
              </Th>
            </tr>
          </thead>
          <tbody>
            {articles.map((a, i) => (
              <Tr key={a.title} $alt={i % 2 === 1}>
                <Td>
                  <TitleCell>
                    <Icon name="doc" size={20} />
                    {a.title}
                  </TitleCell>
                </Td>
                <Td>{a.category}</Td>
                <Td $date>{a.date}</Td>
              </Tr>
            ))}
          </tbody>
        </Table>
        <ScrollBar>
          <div>
            <ScrollButton aria-label="上へ">
              <Caret $dir="up" $big />
            </ScrollButton>
            <Thumb />
          </div>
          <ScrollButton aria-label="下へ">
            <Caret $dir="down" $big />
          </ScrollButton>
        </ScrollBar>
      </TableArea>
      <TerminalTabs>
        {terminalTabs.map((t) => (
          <TerminalTab key={t.label} $width={t.width} $active={t.active} $plain={t.active || t.last}>
            {t.label}
            {t.count && <sub>{t.count}</sub>}
          </TerminalTab>
        ))}
      </TerminalTabs>
    </TerminalBody>
  </Terminal>
);

const App = () => (
  <>
    <GlobalStyle />
    <Defs />
    <Page>
      <Window>
        <MenuBar>
          <LogoBox>
            <Icon name="logo" size={28} />
          </LogoBox>
          {menus.map((m) => (
            <MenuButton key={m.key} $width={m.width} $open={m.open}>
              <Label item={m} />
            </MenuButton>
          ))}
          <WindowButtons>
            <WindowButton aria-label="最小化">
              <Svg viewBox="0 0 18 18" $size={18}>
                <path d="M2 15h11" stroke="#808080" strokeWidth="3" />
              </Svg>
            </WindowButton>
            <WindowButton aria-label="元に戻す">
              <Svg viewBox="0 0 18 18" $size={18}>
                <path d="M6 7V2h10v8h-4M6 3h10M2 8h10v7H2zM2 9h10" fill="none" stroke="#707070" strokeWidth="2" />
              </Svg>
            </WindowButton>
            <WindowButton aria-label="閉じる">
              <Svg viewBox="0 0 18 18" $size={18}>
                <path d="M3 3l12 12M15 3L3 15" stroke="#000" strokeWidth="3" />
              </Svg>
            </WindowButton>
          </WindowButtons>
          <FileMenu />
        </MenuBar>
        <MainToolbar />
        <PeriodToolbar />
        <Workspace>
          <SidePanes />
          <ChartPane>
            <Chart />
            <Ohlc>148.360 148.363 148.346 148.346</Ohlc>
            <OneClick>
              <LotBox>
                <LotInput defaultValue="0.15" aria-label="ロット" />
                <Spin aria-label="ロットを増やす">
                  <Caret $dir="up" $big />
                </Spin>
              </LotBox>
              <BuyTab>
                <span>BUY</span>
              </BuyTab>
              <Price aria-label="SELL" />
              <Price $buy>
                148<strong>40</strong>
                <sup>2</sup>
              </Price>
            </OneClick>
          </ChartPane>
        </Workspace>
        <TerminalPanel />
      </Window>
      <RedFrame />
      <RedArrow viewBox="0 0 290 101" aria-hidden="true">
        <path d="M0 61L107 0 93 39 290 29V34L96 65 118 101z" fill="#f00" />
      </RedArrow>
    </Page>
  </>
);

export default App;
